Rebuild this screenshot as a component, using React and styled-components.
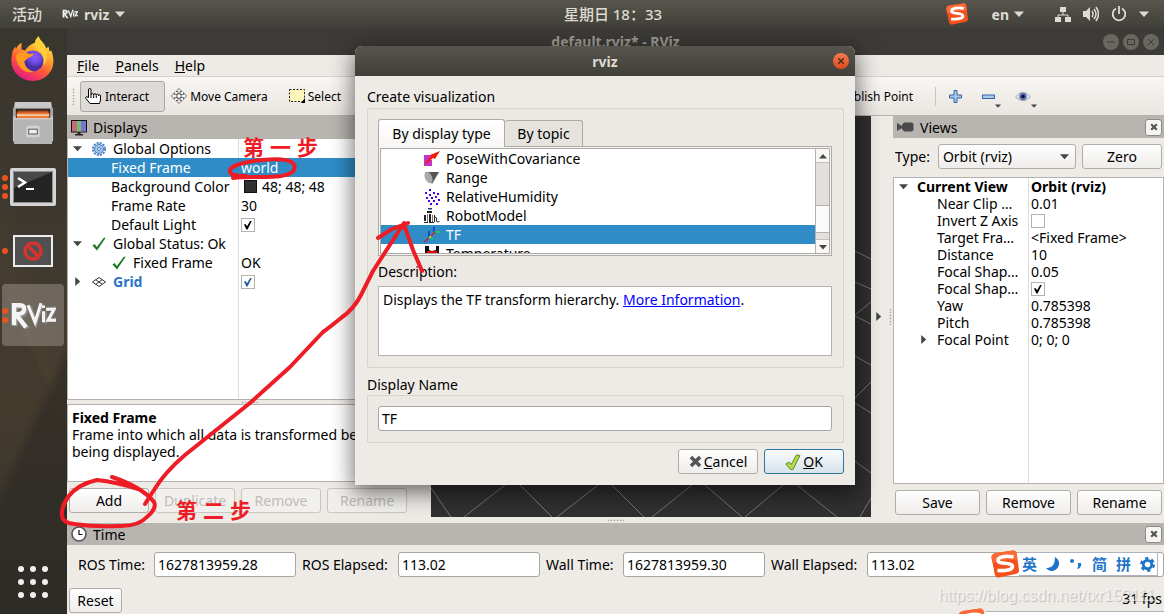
import React from 'react';
import styled, { createGlobalStyle } from 'styled-components';

const GlobalStyle = createGlobalStyle`
  * { box-sizing: border-box; }

  body {
    margin: 0;
    background: #eeebe7;
    color: #000;
    font-family: "Noto Sans", "Noto Sans CJK SC", sans-serif;
    font-size: 14px;
    line-height: 19px;
  }

  button, input, select {
    font: inherit;
    color: inherit;
    margin: 0;
  }

  svg {
    display: block;
    flex: none;
  }
`;

/* ---------- icons ---------- */

const Caret = ({ dir = 'down', color = '#454545', size = 9 }) => (
  <svg width={size} height={size} viewBox="0 0 10 10">
    <path
      fill={color}
      d={dir === 'down' ? 'M0 2.500h10L5 8z' : dir === 'up' ? 'M0 8h10L5 2.500z' : 'M2.500 0v10L8 5z'}
    />
  </svg>
);

const SogouIcon = ({ size = 22 }) => (
  <svg width={size} height={size} viewBox="0 0 28 28">
    <path d="M5 3L22 .5q3-.3 3.600 2.500L28 20q.3 3-2.500 3.800L8 27.500q-3.500.5-4.200-3L.5 7.500Q.2 4 5 3z" fill="#f4511e" />
    <path d="M5 3L22 .5q3-.3 3.600 2.500L26.500 10Q14 8 1.500 13L.5 7.500Q.2 4 5 3z" fill="#fb6a35" />
    <path d="M22.500 7C15 5.500 7 6.500 7 10.500c0 4 14.500 1.500 14.500 6 0 3.500-7 4.500-15 4" fill="none" stroke="#fff" strokeWidth="3.600" />
  </svg>
);

const FirefoxIcon = () => (
  <svg width="46" height="48" viewBox="0 0 48 48">
    <defs>
      <linearGradient id="fox" x1="0.8" y1="0" x2="0.3" y2="1">
        <stop offset="0" stopColor="#fff44f" />
        <stop offset="0.35" stopColor="#ffb02e" />
        <stop offset="0.65" stopColor="#ff5a36" />
        <stop offset="1" stopColor="#e31587" />
      </linearGradient>
      <radialGradient id="globe" cx="0.6" cy="0.3">
        <stop offset="0" stopColor="#9059ff" />
        <stop offset="0.6" stopColor="#6b4be0" />
        <stop offset="1" stopColor="#4a2da8" />
      </radialGradient>
    </defs>
    <path fill="url(#fox)" d="M30 0c1 5 6 7 8 13l2-2c1 2 1 4 1 5l2-1c4 9 3 20-4 26-7 7-19 8-28 2C3 38 0 29 2 20c0-4 2-7 4-9v3c1-3 3-5 6-7v7l4 1c2-4 7-7 10-8 0-3 2-5 4-7z" />
    <circle cx="24" cy="26" r="11" fill="url(#globe)" />
    <path fill="#ff9a1f" d="M6 20c5-4 9-3 12-2 2 1 5 1 7 0-1 3-3 4-6 5-2 1-2 3-4 3 0 5 4 10 10 11-8 3-18-3-19-17z" />
    <path fill="#ffcf3a" d="M26 7c-1 4 3 7 7 11 3 4 3 9 1 13 5-4 6-11 3-17-2-6-6-8-7-13-2 2-3 4-4 6z" />
  </svg>
);

const FilesIcon = () => (
  <svg width="42" height="44" viewBox="0 0 44 46">
    <path d="M3 1h38l2 14v27H1V15z" fill="#c9c9c9" />
    <path d="M1 7h42v9H1z" fill="#a8a8a8" />
    <path d="M4 8h36v11H4z" fill="#35261d" />
    <path d="M6 10h32v3H6z" fill="#a94a21" />
    <path d="M5 12h34v6H5z" fill="#f07b35" />
    <path d="M5 14h34v1.500H5z" fill="#f5e8d8" />
    <path d="M2 18h40v27H2z" fill="#b5b5b5" />
    <path d="M2 18h40v1H2z" fill="#ddd" />
    <rect x="15" y="26" width="14" height="12" rx="2" fill="#d2d2d2" />
    <rect x="17.500" y="29.500" width="9" height="5" fill="#eee" stroke="#555" />
  </svg>
);

const TerminalIcon = () => (
  <svg width="46" height="38" viewBox="0 0 46 38">
    <rect width="46" height="38" rx="2" fill="#d4d4d4" />
    <rect x="3" y="3" width="40" height="32" fill="#8d8d8d" />
    <rect x="4" y="4" width="38" height="30" fill="#242424" />
    <path d="M4 4h38L4 20z" fill="#484848" />
    <path d="M8 10l7 4.500L8 19" fill="none" stroke="#fff" strokeWidth="2.500" />
    <path d="M16 21h8" stroke="#fff" strokeWidth="2" />
  </svg>
);

const BlockedIcon = () => (
  <svg width="40" height="32" viewBox="0 0 40 32">
    <rect width="40" height="32" fill="#ececec" />
    <rect x="2" y="2" width="36" height="28" fill="#505050" />
    <circle cx="20" cy="16" r="8" fill="none" stroke="#d5332f" strokeWidth="3.500" />
    <path d="M14.500 10.500l11 11" stroke="#d5332f" strokeWidth="3.500" />
  </svg>
);

const RvizMark = ({ width = 46 }) => (
  <svg width={width} height={width * 0.62} viewBox="0 0 46 28">
    <g fill="none" stroke="#8a8a8a" strokeWidth="3.500">
      <path d="M6 25V6h6q5 0 4 5-1 4-8 4l10 12M20 5l6 17 6-19M35 10v12M37 8l8-1-6 12 8-1" />
    </g>
    <g fill="none" stroke="#f4f4f4">
      <path d="M4 24V4h6q5 0 4 5-1 4-8 4l10 13" strokeWidth="4.500" />
      <path d="M18 4l7 17 6-19M33.500 10v11M36 8h8l-6 11h8" strokeWidth="3" />
      <path d="M32 5.500h3" strokeWidth="2.500" />
    </g>
  </svg>
);

const AppsIcon = () => (
  <svg width="32" height="32" viewBox="0 0 32 32" fill="#f2f1ee">
    {[3, 16, 29].map((y) => [3, 15, 27].map((x) => <circle key={`${x}-${y}`} cx={x + 1} cy={y} r="3" />))}
  </svg>
);

const NetworkIcon = () => (
  <svg width="16" height="16" viewBox="0 0 16 16" fill="#dfdbd2">
    <path d="M5 1h6v5H5zM0 11h6v5H0zM10 11h6v5h-6z" />
    <path d="M8 6v3M3 12V9h10v3" fill="none" stroke="#dfdbd2" />
  </svg>
);

const SoundIcon = () => (
  <svg width="16" height="16" viewBox="0 0 16 16" fill="none" stroke="#dfdbd2" strokeWidth="1.500">
    <path d="M0 5h3l4-4v14l-4-4H0z" fill="#dfdbd2" stroke="none" />
    <path d="M9 5q2 3 0 6M11 3q4 5 0 10M13 1q5 7 0 14" />
  </svg>
);

const PowerIcon = () => (
  <svg width="16" height="16" viewBox="0 0 16 16" fill="none" stroke="#dfdbd2" strokeWidth="1.800">
    <path d="M5 2.500a6.300 6.300 0 1 0 6 0M8 0v8" />
  </svg>
);

const HandIcon = () => (
  <svg width="16" height="16" viewBox="0 0 16 16">
    <path d="M3.500 9.500V2q0-1.500 1.300-1.500T6 2v5q0-1.500 1.300-1.500T8.700 7q0-1.200 1.300-1.200T11.300 7.200q0-1 1.200-1T13.700 7.700q0-.9.900-.9t.9 1.200V12l-1 3.500H5l-4-5q-.8-1.500.5-1.800z" fill="#fff" stroke="#000" />
    <path d="M6 7v3M8.700 7v3M11.300 7.500V10" stroke="#000" />
  </svg>
);

const MoveIcon = () => (
  <svg width="16" height="16" viewBox="0 0 16 16" fill="#f5f5f5" stroke="#555" strokeWidth="0.800">
    <path d="M8 .5l3 3H9v3h3.500v-2l3 3.500-3 3.500v-2H9v3h2l-3 3-3-3h2v-3H3.500v2L.5 8l3-3.500v2H7v-3H5z" />
    <circle cx="8" cy="8" r="2.500" fill="none" />
  </svg>
);

const SelectIcon = () => (
  <svg width="16" height="14" viewBox="0 0 16 14">
    <rect x="0.500" y="0.500" width="15" height="12" fill="#fff6b8" stroke="#222" strokeDasharray="2 1.500" />
    <path d="M16 9v5h-4z" />
  </svg>
);

const PlusIcon = () => (
  <svg width="13" height="13" viewBox="0 0 13 13">
    <path d="M5 .5h3V5h4.500v3H8v4.500H5V8H.5V5H5z" fill="#a9c8ea" stroke="#3465a4" />
  </svg>
);

const MinusIcon = () => (
  <svg width="13" height="13" viewBox="0 0 13 13">
    <rect x="0.500" y="5" width="12" height="3.500" fill="#a9c8ea" stroke="#3465a4" />
  </svg>
);

const EyeIcon = () => (
  <svg width="16" height="13" viewBox="0 0 16 13">
    <path d="M.5 7Q8-2.500 15.500 7 8 14.500.5 7z" fill="#e8e8e8" stroke="#aaa" />
    <circle cx="8" cy="6.500" r="3.800" fill="#5a6fc0" />
    <circle cx="8" cy="6.500" r="1.800" fill="#0b0b2a" />
  </svg>
);

const MonitorIcon = () => (
  <svg width="16" height="16" viewBox="0 0 16 16">
    <rect x="0.500" y="0.500" width="15" height="11.500" fill="#c86b78" stroke="#111" />
    <path d="M6 1h4v10.500H6z" fill="#6cc078" />
    <path d="M10 1h5v10.500h-5z" fill="#7a74cf" />
    <path d="M6.500 12h3v2h2.500v1.500H4V14h2.500z" fill="#222" />
  </svg>
);

const GearIcon = () => (
  <svg width="14" height="14" viewBox="0 0 14 14" fill="none" stroke="#4a7fc4">
    <circle cx="7" cy="7" r="6" strokeWidth="2" strokeDasharray="2 1.140" />
    <circle cx="7" cy="7" r="4.500" fill="#a4c4ec" />
    <circle cx="7" cy="7" r="1.500" fill="#fff" />
  </svg>
);

const CheckIcon = () => (
  <svg width="14" height="14" viewBox="0 0 14 14">
    <path d="M.5 8.500L2.500 7l2.300 3L12 .5l1.500.5L5 13.500z" fill="#1b7a22" />
  </svg>
);

const GridIcon = () => (
  <svg width="14" height="10" viewBox="0 0 14 10" fill="none" stroke="#333">
    <path d="M7 .5L13.500 5 7 9.500.5 5zM3.700 2.700l6.600 4.600M10.300 2.700L3.700 7.300" />
  </svg>
);

const CameraIcon = () => (
  <svg width="17" height="10" viewBox="0 0 17 10" fill="#4a4a4a">
    <path d="M0 1l5 3V3l2-2.500h8L16.500 2v6L15 9.500H7L5 7V6L0 9z" />
  </svg>
);

const ClockIcon = () => (
  <svg width="16" height="16" viewBox="0 0 16 16" fill="none">
    <circle cx="8" cy="8" r="7" fill="#fff" stroke="#555" strokeWidth="1.600" />
    <path d="M8 4v4.500h3.500" stroke="#111" strokeWidth="1.200" />
  </svg>
);

const CrossIcon = ({ size = 8, color = '#555' }) => (
  <svg width={size} height={size} viewBox="0 0 8 8">
    <path d="M1.200 1.200l5.600 5.600M6.800 1.200L1.200 6.800" stroke={color} strokeWidth="2.200" />
  </svg>
);

const OkIcon = () => (
  <svg width="16" height="16" viewBox="0 0 16 16">
    <path d="M.8 10l3-2 2.400 2.500L11.500.8l3.500.7L8 15.500H5.500z" fill="#b5d94c" stroke="#5b8f22" />
  </svg>
);

const PoseIcon = () => (
  <svg width="16" height="16" viewBox="0 0 16 16">
    <path d="M0 4h7v5h1v6H0z" fill="#c234c8" />
    <path d="M16 0l-5 8-2-1-7 6-1-1 6-7-1-1z" fill="#f21c0d" />
  </svg>
);

const RangeIcon = () => (
  <svg width="16" height="14" viewBox="0 0 16 14">
    <path d="M1 1h14L8 13z" fill="#555" />
    <ellipse cx="4.500" cy="6.500" rx="3.500" ry="6" fill="#aaa" transform="rotate(-25 4.500 6.500)" />
  </svg>
);

const HumidityIcon = () => (
  <svg width="16" height="16" viewBox="0 0 16 16" fill="#4a00f0">
    <path d="M5 0h2v2H5zM1 3h2v2H1zM9 3h2v2H9zM13 4h2v2h-2zM5 5h2v2H5zM11 7h2v2h-2zM2 8h2v2H2zM7 8h2v2H7zM14 10h2v2h-2zM4 11h2v2H4zM9 11h2v2H9zM6 14h2v2H6zM12 14h2v2h-2z" />
  </svg>
);

const RobotIcon = () => (
  <svg width="16" height="16" viewBox="0 0 16 16">
    <path d="M4 0h4v1.500H4z" fill="#223a7a" />
    <path d="M3 3h5v2H3zM0 7h2v6H0zM5 6h2v9H5zM10 7h1v7h-1z" fill="#222" />
    <path d="M3 6h1v8H3zM8 7h1v7H8z" fill="#777" />
    <path d="M0 14.500h4M6 14.500h4M11 9q2 0 1.500 3t3 1.500" fill="none" stroke="#222" />
  </svg>
);

const TfIcon = () => (
  <svg width="16" height="16" viewBox="0 0 16 16" fill="none" strokeWidth="1.500">
    <path d="M5 4v7M10 0v5" stroke="#1d2fd0" />
    <path d="M5 10l4 2M10 5h6" stroke="#17d83a" />
    <path d="M0 15l5-4M7 9l4-4" stroke="#c22" />
    <path d="M5 11l2-2" stroke="#dcd23c" />
  </svg>
);

const TemperatureIcon = () => (
  <svg width="16" height="16" viewBox="0 0 16 16">
    <path d="M1 0h14v16H1z" fill="#111" />
    <path d="M3 5h10v10H3z" fill="#e00" />
    <path d="M5 0h7v4l-4 1-3-1z" fill="#fff" />
    <path d="M6 8h4v2H6z" fill="#fff" />
  </svg>
);

/* ---------- desktop ---------- */

const Desktop = styled.div`
  position: relative;
  min-height: 100vh;
  display: flex;
  flex-direction: column;
  overflow: hidden;
`;

const TopBar = styled.header`
  height: 28px;
  display: grid;
  grid-template-columns: 62px 1fr auto 1fr;
  align-items: center;
  background: linear-gradient(#57554c, #403f39);
  color: #dfdbd2;
  font-weight: 700;
`;

const TopButton = styled.button`
  display: flex;
  align-items: center;
  gap: 6px;
  padding: 0;
  border: 0;
  background: none;
  font-weight: 700;
`;

const Activities = styled(TopButton)`
  padding-left: 12px;
  font-size: 15px;
  font-weight: 500;
`;

const Clock = styled.span`
  font-size: 15px;
  font-weight: 500;
`;

const Tray = styled.div`
  display: flex;
  justify-content: flex-end;
  align-items: center;
  gap: 12px;
  padding-right: 15px;
`;

const TrayGroup = styled.div`
  display: flex;
  align-items: center;
  gap: 5px;
  margin: 0 19px 0 12px;
`;

const Body = styled.div`
  flex: 1;
  display: flex;
`;

const Dock = styled.nav`
  flex: none;
  width: 67px;
  display: flex;
  flex-direction: column;
  align-items: flex-start;
  gap: 2px;
  padding: 0 2px 1px;
  background:
    linear-gradient(115deg, transparent 62%, rgba(42, 40, 36, 0.6) 66%),
    linear-gradient(65deg, transparent 45%, rgba(95, 80, 55, 0.2) 46%, transparent 60%),
    linear-gradient(#39362f, #40392e 45%, #443b2d 65%, #34322d);
`;

const DockItem = styled.button`
  width: 62px;
  height: 62px;
  display: grid;
  grid-template-columns: 6px 1fr;
  align-items: center;
  justify-items: center;
  padding: 0 6px 0 0;
  border: 0;
  border-radius: 4px;
  background: ${({ $active }) => ($active ? 'rgba(190, 184, 175, 0.36)' : 'none')};

  &:last-child { margin-top: auto; }
`;

const Dots = styled.span`
  display: flex;
  flex-direction: column;
  gap: 3px;

  i {
    width: 6px;
    height: 6px;
    border-radius: 50%;
    background: #e95420;
  }
`;

/* ---------- main window ---------- */

const Window = styled.main`
  flex: 1;
  min-width: 0;
  display: flex;
  flex-direction: column;
`;

const TitleBar = styled.div`
  height: 27px;
  display: grid;
  grid-template-columns: 1fr auto 1fr;
  align-items: center;
  padding: 0 5px;
  background: #3c3b37;
  color: #a09d95;
  font-weight: 700;

  span { grid-column: 2; }
`;

const WindowButtons = styled.div`
  display: flex;
  justify-content: flex-end;
  gap: 4px;
`;

const RoundButton = styled.button`
  width: 16px;
  height: 16px;
  display: grid;
  place-items: center;
  padding: 0;
  border: 0;
  border-radius: 50%;
  background: ${({ $close }) => ($close ? 'linear-gradient(#f47a52, #df4a1b)' : '#686760')};
  color: #3c3b37;
`;

const MenuBar = styled.div`
  height: 22px;
  display: flex;
  align-items: center;
  gap: 16px;
  padding: 0 10px;
  border-bottom: 1px solid #d5d1cc;

  button {
    padding: 0;
    border: 0;
    background: none;
  }
`;

const ToolBar = styled.div`
  height: 39px;
  display: flex;
  align-items: center;
  padding: 0 116px 0 5px;
  background: linear-gradient(#f8f6f3, #eae6e1);
  border-bottom: 1px solid #b5b1ac;
  font-size: 12px;
`;

const Handle = styled.span`
  width: ${({ $vertical }) => ($vertical ? '3px' : '17px')};
  height: ${({ $vertical }) => ($vertical ? '17px' : '3px')};
  background: radial-gradient(#aaa6a0 40%, transparent 50%) 0 0 / 3px 3px;
`;

const Tool = styled.button`
  height: 31px;
  display: flex;
  align-items: center;
  gap: ${({ $pressed }) => ($pressed ? '4px' : '3px')};
  margin-left: ${({ $pressed }) => ($pressed ? '5px' : '0')};
  padding: 0 ${({ $pressed }) => ($pressed ? '15px' : '14px')} 0 ${({ $pressed }) => ($pressed ? '4px' : '5px')};
  border: 1px solid ${({ $pressed }) => ($pressed ? '#aaa6a1' : 'transparent')};
  border-radius: 3px;
  background: ${({ $pressed }) => ($pressed ? '#dedad7' : 'none')};
`;

const ToolsEnd = styled.div`
  display: flex;
  align-items: center;
  margin-left: auto;
`;

const ToolSeparator = styled.span`
  width: 1px;
  height: 19px;
  margin: 0 13px 0 7px;
  background: #c9c5c0;
`;

const IconTool = styled.button`
  width: 33px;
  height: 26px;
  display: flex;
  align-items: center;
  padding: 0;
  border: 0;
  background: none;

  svg + svg { align-self: flex-end; }
`;

const Workspace = styled.div`
  flex: 1;
  display: flex;
`;

const Panel = styled.section`
  flex: none;
  width: ${({ $width }) => $width}px;
  display: flex;
  flex-direction: column;
`;

const PanelHeader = styled.h2`
  height: ${({ $tall }) => ($tall ? '23px' : '22px')};
  display: flex;
  align-items: center;
  gap: 6px;
  margin: 0;
  padding: 0 2px 0 4px;
  background: #b8b4b0;
  font-size: 14px;
  font-weight: 400;

  button { margin-left: auto; }
`;

const CloseButton = styled.button`
  width: 17px;
  height: 17px;
  display: grid;
  place-items: center;
  padding: 0;
  border: 1px solid #8f8b86;
  border-radius: 3px;
  background: #f6f5f3;
`;

const Tree = styled.div`
  flex: 1;
  border: 1px solid #b5b1ac;
  border-width: ${({ $framed }) => ($framed ? '1px' : '0 0 1px 1px')};
  background: linear-gradient(#dcdcdc, #dcdcdc) ${({ $split }) => $split}px 0 / 1px 100% no-repeat #fff;
`;

const TreeRow = styled.div`
  height: ${({ $height }) => $height}px;
  display: grid;
  grid-template-columns: ${({ $split }) => $split}px 1fr;
  align-items: center;
  line-height: ${({ $height }) => $height}px;
  background: ${({ $selected }) => ($selected ? '#308cc6' : 'none')};
  color: ${({ $selected }) => ($selected ? '#fff' : '#000')};
  font-weight: ${({ $bold }) => ($bold ? 700 : 400)};
`;

const TreeName = styled.span`
  display: flex;
  align-items: center;
  padding-left: ${({ $indent }) => $indent}px;
  min-width: 0;
  color: ${({ $link }) => ($link ? '#2a76c6' : 'inherit')};
  font-weight: ${({ $link }) => ($link ? 700 : 'inherit')};
  white-space: nowrap;
`;

const TreeSlot = styled.span`
  flex: none;
  width: ${({ $width }) => $width}px;
`;

const TreeValue = styled.span`
  display: flex;
  align-items: center;
  gap: 5px;
  padding-left: 3px;
`;

const Swatch = styled.span`
  width: 13px;
  height: 13px;
  margin-left: 3px;
  border: 1px solid #111;
  background: #303030;
`;

const CheckBox = styled.input`
  appearance: none;
  width: 14px;
  height: 14px;
  border: 1px solid #b5b1ac;
  background: #fff;
  color: ${({ $blue }) => ($blue ? '#1d5fa0' : '#000')};

  &:checked::before {
    content: "";
    display: block;
    width: 8px;
    height: 9px;
    margin: 2px 0 0 2px;
    background: currentColor;
    clip-path: polygon(0 45%, 20% 40%, 38% 65%, 80% 0, 100% 0, 45% 100%, 30% 100%);
  }
`;

const Splitter = styled.div`
  height: ${({ $height }) => $height}px;
  display: flex;
  align-items: center;
  justify-content: center;
`;

const SideSplitter = styled.div`
  flex: none;
  width: 22px;
  display: flex;
  align-items: center;
  justify-content: space-between;
  padding: 0 1px 0 3px;
`;

const HelpText = styled.div`
  height: 78px;
  padding: 4px;
  overflow: hidden;
  border: 1px solid #b5b1ac;
  background: #fff;
  line-height: 17px;
  white-space: nowrap;
`;

const ButtonRow = styled.div`
  display: flex;
  gap: 6px;
  padding: ${({ $pad }) => $pad};
`;

const Button = styled.button`
  height: 25px;
  min-width: ${({ $width }) => $width || 80}px;
  display: flex;
  align-items: center;
  justify-content: center;
  gap: 2px;
  padding: 0 6px;
  border: 1px solid ${({ $primary }) => ($primary ? '#30739c' : '#b0aca8')};
  border-radius: 3px;
  background: ${({ $primary }) => ($primary ? 'linear-gradient(#fbfcfd, #d7e2ea)' : 'linear-gradient(#fefefe, #efedeb)')};

  &:disabled {
    color: #bebbb7;
    border-color: #c9c5c1;
    background: #f2f0ed;
  }
`;

const Scene = styled.div`
  flex: 1;
  min-width: 0;
  background: #303030;

  svg {
    width: 100%;
    height: 401px;
  }
`;

const TypeRow = styled.div`
  display: flex;
  align-items: center;
  gap: 6px;
  padding: 6px 2px 8px;

  label { margin-right: 2px; }
`;

const SelectBox = styled.span`
  flex: 1;
  display: grid;
  align-items: center;

  select, svg { grid-area: 1 / 1; }
  svg { justify-self: end; margin-right: 7px; pointer-events: none; }
`;

const Select = styled.select`
  appearance: none;
  width: 100%;
  height: 25px;
  padding: 0 4px;
  border: 1px solid #b0aca8;
  border-radius: 3px;
  background: linear-gradient(#fefefe, #efedeb);
`;

const TimeRow = styled.div`
  display: flex;
  align-items: center;
  gap: 6px;
  padding: 7px 0 11px 11px;
`;

const Field = styled.label`
  display: flex;
  align-items: center;
  justify-content: space-between;
  gap: 6px;
  flex: ${({ $grow }) => ($grow ? '1' : 'none')};
  width: ${({ $width }) => ($width ? `${$width}px` : 'auto')};
  white-space: nowrap;
`;

const FieldName = styled.span`
  min-width: ${({ $grow }) => ($grow ? '90px' : '0')};
`;

const TextInput = styled.input`
  height: 25px;
  width: 142px;
  min-width: 0;
  flex: ${({ $grow }) => ($grow ? '1' : 'none')};
  padding: 0 3px;
  border: 1px solid #a9a5a0;
  border-radius: 3px;
  background: #fff;
`;

const StatusRow = styled.div`
  display: flex;
  align-items: center;
  justify-content: space-between;
  padding: 0 2px 1px;
`;

const Fps = styled.span`
  margin-bottom: 5px;
`;

/* ---------- dialog ---------- */

const Dialog = styled.section`
  position: absolute;
  left: 355px;
  top: 46px;
  width: 500px;
  border-radius: 7px 7px 0 0;
  background: #eeebe7;
  box-shadow: 0 6px 22px 2px rgba(0, 0, 0, 0.55);
`;

const DialogTitle = styled(TitleBar)`
  height: 30px;
  padding: 0 6px;
  border-radius: 7px 7px 0 0;
  background: linear-gradient(#57554c, #403f39);
  color: #dfdbd2;
`;

const DialogBody = styled.div`
  display: flex;
  flex-direction: column;
  padding: 11px 11px 11px 12px;
`;

const GroupLabel = styled.h3`
  margin: 0 0 2px;
  font-size: 14px;
  font-weight: 400;
`;

const NameLabel = styled.label`
  padding: 7px 0 1px;
`;

const Group = styled.div`
  padding: 10px 11px 11px 10px;
  border: 1px solid #d6d2cd;
  border-radius: 2px;
  background: #ece9e5;
`;

const Tabs = styled.div`
  display: flex;
  align-items: flex-end;
  height: 27px;
`;

const Tab = styled.button`
  height: ${({ $active }) => ($active ? '28px' : '26px')};
  width: ${({ $active }) => ($active ? '127px' : '78px')};
  margin-bottom: ${({ $active }) => ($active ? '-1px' : '0')};
  padding: 0;
  border: 1px solid #aeaaa5;
  border-left-width: ${({ $active }) => ($active ? '1px' : '0')};
  border-bottom: 0;
  border-radius: 3px 3px 0 0;
  background: ${({ $active }) => ($active ? 'linear-gradient(#fff, #f8f7f6)' : '#e6e3df')};
  z-index: 1;
`;

const ListFrame = styled.div`
  height: 110px;
  padding: 1px;
  border: 1px solid #aeaaa5;
  background: #f6f5f3;
`;

const ListInner = styled.div`
  height: 106px;
  display: flex;
  border: 1px solid #aeaaa5;
  background: #fff;
`;

const List = styled.ul`
  flex: 1;
  margin: 0;
  padding: 0;
  overflow: hidden;
  list-style: none;
`;

const ListItem = styled.li`
  height: 19px;
  display: flex;
  align-items: center;
  gap: 6px;
  padding-left: 43px;
  background: ${({ $selected }) => ($selected ? '#308cc6' : 'none')};
  color: ${({ $selected }) => ($selected ? '#fff' : '#000')};
`;

const ScrollBar = styled.div`
  width: 14px;
  display: flex;
  flex-direction: column;
  align-items: center;
  border-left: 1px solid #b5b1ac;
  background: #e2e0dd;
`;

const ScrollButton = styled.button`
  width: 13px;
  height: 14px;
  display: grid;
  place-items: center;
  padding: 0;
  border: solid #c5c1bc;
  border-width: ${({ $end }) => ($end ? '1px 0 0' : '0 0 1px')};
  background: #f8f7f6;
`;

const ScrollThumb = styled.div`
  width: 13px;
  height: 28px;
  margin: auto 0 6px;
  border: 1px solid #b5b1ac;
  border-width: 1px 0;
  background: #fbfafa;
`;

const DescriptionLabel = styled.div`
  padding: 6px 0 5px;
`;

const Description = styled.div`
  height: 70px;
  padding: 3px 4px;
  border: 1px solid #b5b1ac;
  background: #fff;

  a { color: #00f; }
`;

const NameInput = styled(TextInput)`
  display: block;
  width: 100%;
`;

const DialogButtons = styled.div`
  display: flex;
  justify-content: flex-end;
  gap: 6px;
  padding-top: 6px;
`;

/* ---------- floating things ---------- */

const Ime = styled.div`
  position: absolute;
  right: 6px;
  top: 550px;
  display: flex;
  align-items: center;
  color: #1e74c8;
  font-weight: 700;
  font-size: 15px;
`;

const ImeBar = styled.div`
  height: 24px;
  display: flex;
  align-items: center;
  gap: 9px;
  padding: 0 2px 0 3px;
  border: 1px solid #b0b4bc;
  border-left: 0;
  background: #fff;
`;

const ImeGhost = styled(Ime)`
  right: 0;
  top: 608px;
  width: 206px;
  align-items: flex-start;

  div {
    flex: 1;
    margin-top: 3px;
    height: 24px;
    padding: 0;
    border-right: 0;
  }
`;

const Watermark = styled.span`
  position: absolute;
  right: 9px;
  top: 586px;
  color: rgba(255, 255, 255, 0.6);
  text-shadow: 1px 1px 1px rgba(0, 0, 0, 0.2);
  font-family: "Liberation Sans", sans-serif;
  font-size: 16px;
`;

const Marks = styled.svg`
  position: absolute;
  inset: 0;
  pointer-events: none;
`;

const Step = styled.div`
  position: absolute;
  left: ${({ $x }) => $x}px;
  top: ${({ $y }) => $y}px;
  display: flex;
  gap: 6px;
  color: #ee1c25;
  font-family: "Noto Sans CJK SC", sans-serif;
  font-size: 21px;
  font-weight: 700;
  line-height: 24px;
`;

/* ---------- data ---------- */

const displays = [
  { name: 'Global Options', indent: 5, open: true, icon: <GearIcon /> },
  { name: 'Fixed Frame', indent: 43, value: 'world', selected: true },
  { name: 'Background Color', indent: 43, value: '48; 48; 48', swatch: true },
  { name: 'Frame Rate', indent: 43, value: '30' },
  { name: 'Default Light', indent: 43, check: true },
  { name: 'Global Status: Ok', indent: 5, open: true, icon: <CheckIcon /> },
  { name: 'Fixed Frame', indent: 44, icon: <CheckIcon />, value: 'OK' },
  { name: 'Grid', indent: 5, open: false, icon: <GridIcon />, link: true, check: true },
];

const view = [
  { name: 'Current View', value: 'Orbit (rviz)', indent: 5, open: true, bold: true },
  { name: 'Near Clip …', value: '0.01', indent: 43 },
  { name: 'Invert Z Axis', check: false, indent: 43 },
  { name: 'Target Fra…', value: '<Fixed Frame>', indent: 43 },
  { name: 'Distance', value: '10', indent: 43 },
  { name: 'Focal Shap…', value: '0.05', indent: 43 },
  { name: 'Focal Shap…', check: true, indent: 43 },
  { name: 'Yaw', value: '0.785398', indent: 43 },
  { name: 'Pitch', value: '0.785398', indent: 43 },
  { name: 'Focal Point', value: '0; 0; 0', indent: 25, open: false },
];

const types = [
  { name: 'PoseWithCovariance', icon: <PoseIcon /> },
  { name: 'Range', icon: <RangeIcon /> },
  { name: 'RelativeHumidity', icon: <HumidityIcon /> },
  { name: 'RobotModel', icon: <RobotIcon /> },
  { name: 'TF', icon: <TfIcon />, selected: true },
  { name: 'Temperature', icon: <TemperatureIcon /> },
];

const dock = [
  { name: 'Firefox', icon: <FirefoxIcon />, dots: 0 },
  { name: 'Files', icon: <FilesIcon />, dots: 0 },
  { name: 'Terminal', icon: <TerminalIcon />, dots: 3 },
  { name: 'Blocked', icon: <BlockedIcon />, dots: 1 },
  { name: 'RViz', icon: <RvizMark />, dots: 2, active: true },
  { name: 'Applications', icon: <AppsIcon />, dots: 0 },
];

const times = [
  { label: 'ROS Time:', value: '1627813959.28', width: 218 },
  { label: 'ROS Elapsed:', value: '113.02', width: 238 },
  { label: 'Wall Time:', value: '1627813959.30', width: 219 },
  { label: 'Wall Elapsed:', value: '113.02', grow: true },
];

const PropertyTree = ({ rows, split, height, framed }) => (
  <Tree $split={split} $framed={framed} role="tree">
    {rows.map((row, i) => (
      <TreeRow key={i} $split={split} $height={height} $selected={row.selected} $bold={row.bold} role="treeitem">
        <TreeName $indent={row.indent} $link={row.link}>
          {row.open !== undefined && (
            <>
              <Caret dir={row.open ? 'down' : 'right'} />
              <TreeSlot $width={row.icon ? 10 : 9} />
            </>
          )}
          {row.icon}
          {row.icon && <TreeSlot $width={7} />}
          {row.name}
        </TreeName>
        <TreeValue>
          {row.swatch && <Swatch />}
          {row.check !== undefined && (
            <CheckBox type="checkbox" defaultChecked={row.check} $blue={row.link} aria-label={row.name} />
          )}
          {row.value}
        </TreeValue>
      </TreeRow>
    ))}
  </Tree>
);

const AddDisplayDialog = () => (
  <Dialog role="dialog" aria-label="rviz">
    <DialogTitle>
      <span>rviz</span>
      <WindowButtons>
        <RoundButton $close aria-label="Close dialog">
          <svg width="6" height="6" viewBox="0 0 6 6"><path d="M0 0l6 6M6 0L0 6" stroke="#3c2a20" strokeWidth="1.300" /></svg>
        </RoundButton>
      </WindowButtons>
    </DialogTitle>
    <DialogBody>
      <GroupLabel>Create visualization</GroupLabel>
      <Group>
        <Tabs role="tablist">
          <Tab $active role="tab">By display type</Tab>
          <Tab role="tab">By topic</Tab>
        </Tabs>
        <ListFrame>
          <ListInner>
            <List>
              {types.map((type) => (
                <ListItem key={type.name} $selected={type.selected}>{type.icon}{type.name}</ListItem>
              ))}
            </List>
            <ScrollBar>
              <ScrollButton aria-label="Scroll up"><Caret dir="up" size={8} /></ScrollButton>
              <ScrollThumb />
              <ScrollButton $end aria-label="Scroll down"><Caret size={8} /></ScrollButton>
            </ScrollBar>
          </ListInner>
        </ListFrame>
        <DescriptionLabel>Description:</DescriptionLabel>
        <Description>
          Displays the TF transform hierarchy. <a href="#tf">More Information</a>.
        </Description>
      </Group>
      <NameLabel htmlFor="display-name">Display Name</NameLabel>
      <Group>
        <NameInput id="display-name" defaultValue="TF" />
      </Group>
      <DialogButtons>
        <Button><CrossIcon size={13} /><span><u>C</u>ancel</span></Button>
        <Button $primary><OkIcon /><span><u>O</u>K</span></Button>
      </DialogButtons>
    </DialogBody>
  </Dialog>
);

const App = () => (
  <Desktop>
    <GlobalStyle />
    <TopBar>
      <Activities>活动</Activities>
      <TopButton>
        <RvizMark width={16} />
        rviz
        <Caret color="#dfdbd2" size={10} />
      </TopButton>
      <Clock>星期日 18：33</Clock>
      <Tray>
        <SogouIcon />
        <TrayGroup>en <Caret color="#dfdbd2" size={10} /></TrayGroup>
        <NetworkIcon />
        <SoundIcon />
        <PowerIcon />
        <Caret color="#dfdbd2" size={10} />
      </Tray>
    </TopBar>

    <Body>
      <Dock>
        {dock.map((item) => (
          <DockItem key={item.name} $active={item.active} aria-label={item.name}>
            <Dots>{Array.from({ length: item.dots }, (_, i) => <i key={i} />)}</Dots>
            {item.icon}
          </DockItem>
        ))}
      </Dock>

      <Window>
        <TitleBar>
          <span>default.rviz* - RViz</span>
          <WindowButtons>
            {['M4 8h8', 'M4.500 5.500h7v5h-7z', 'M5 5l6 6M11 5l-6 6'].map((d) => (
              <RoundButton key={d} aria-label="Window control">
                <svg width="16" height="16" viewBox="0 0 16 16" fill="none" stroke="#3c3b37"><path d={d} /></svg>
              </RoundButton>
            ))}
          </WindowButtons>
        </TitleBar>
        <MenuBar>
          <button><u>F</u>ile</button>
          <button><u>P</u>anels</button>
          <button><u>H</u>elp</button>
        </MenuBar>
        <ToolBar>
          <Handle $vertical />
          <Tool $pressed><HandIcon />Interact</Tool>
          <Tool><MoveIcon />Move Camera</Tool>
          <Tool><SelectIcon />Select</Tool>
          <ToolsEnd>
            <Tool>Publish Point</Tool>
            <ToolSeparator />
            <IconTool aria-label="Add tool"><PlusIcon /></IconTool>
            <IconTool aria-label="Remove tool"><MinusIcon /><Caret size={6} /></IconTool>
            <IconTool aria-label="Visibility"><EyeIcon /><Caret size={6} /></IconTool>
          </ToolsEnd>
        </ToolBar>

        <Workspace>
          <Panel $width={364}>
            <PanelHeader $tall><MonitorIcon />Displays</PanelHeader>
            <PropertyTree rows={displays} split={170} height={19} />
            <Splitter $height={4}><Handle /></Splitter>
            <HelpText>
              <b>Fixed Frame</b><br />
              Frame into which all data is transformed before<br />
              being displayed.
            </HelpText>
            <ButtonRow $pad="6px 2px 4px">
              <Button>Add</Button>
              <Button disabled>Duplicate</Button>
              <Button disabled>Remove</Button>
              <Button disabled>Rename</Button>
            </ButtonRow>
          </Panel>

          <Scene>
            <svg viewBox="0 0 440 401" preserveAspectRatio="xMaxYMax slice" stroke="#777" fill="none">
              <path d="M0 372l20 29M74 369l-41 32M89 369l32 32M167 369l-41 32M181 369l32 32M261 369l-40 32M274 369l37 32M352 369l-38 32M366 369l40 32M424 345l16 12M429 401l11-19" />
              <path d="M424 135l16 8M424 166l16 7M424 199l16-13M424 200l16 8M424 240l16 9M424 282l16-16M424 287l16 10" />
            </svg>
          </Scene>
          <SideSplitter><Caret dir="right" /><Handle $vertical /></SideSplitter>

          <Panel $width={271}>
            <PanelHeader><CameraIcon />Views<CloseButton aria-label="Close views"><CrossIcon /></CloseButton></PanelHeader>
            <TypeRow>
              <label htmlFor="view-type">Type:</label>
              <SelectBox>
                <Select id="view-type"><option>Orbit (rviz)</option></Select>
                <Caret />
              </SelectBox>
              <Button>Zero</Button>
            </TypeRow>
            <PropertyTree rows={view} split={134} height={17} framed />
            <ButtonRow $pad="6px 2px 2px">
              <Button $width={85}>Save</Button>
              <Button $width={85}>Remove</Button>
              <Button $width={85}>Rename</Button>
            </ButtonRow>
          </Panel>
        </Workspace>

        <Splitter $height={6}><Handle /></Splitter>
        <PanelHeader><ClockIcon />Time<CloseButton aria-label="Close time"><CrossIcon /></CloseButton></PanelHeader>
        <TimeRow>
          {times.map((time) => (
            <Field key={time.label} $width={time.width} $grow={time.grow}>
              <FieldName $grow={time.grow}>{time.label}</FieldName>
              <TextInput defaultValue={time.value} $grow={time.grow} />
            </Field>
          ))}
        </TimeRow>
        <StatusRow>
          <Button $width={53}>Reset</Button>
          <Fps>31 fps</Fps>
        </StatusRow>
      </Window>
    </Body>

    <AddDisplayDialog />

    <Ime>
      <SogouIcon size={28} />
      <ImeBar>
        <span>英</span>
        <svg width="14" height="14" viewBox="0 0 14 14" fill="#1e74c8"><path d="M9 0q5 3 4 8-2 6-8 6-3 0-5-3 9 1 9-11z" /></svg>
        <svg width="14" height="14" viewBox="0 0 14 14" fill="#1e74c8"><circle cx="3" cy="4" r="2" /><path d="M9 6h3q1 4-3 6l-1-1q2-1 1-2z" /></svg>
        <span>简</span>
        <span>拼</span>
        <svg width="15" height="15" viewBox="0 0 16 16" fill="none" stroke="#1e74c8">
          <circle cx="8" cy="8" r="4.500" strokeWidth="3" />
          <circle cx="8" cy="8" r="6.700" strokeWidth="2.500" strokeDasharray="3.500 3.516" />
        </svg>
      </ImeBar>
    </Ime>
    <ImeGhost><SogouIcon size={28} /><ImeBar /></ImeGhost>
    <Watermark>https://blog.csdn.net/txr152111</Watermark>

    <Marks width="1164" height="614" viewBox="0 0 1164 614" fill="none" stroke="#ee1c25" strokeWidth="4" strokeLinecap="round" strokeLinejoin="round">
      <path d="M233 178C252 175 287 181 294 170 298 159 280 158 262 160 244 162 228 166 230 172 231 176 240 176 246 176" />
      <path d="M138 489Q116 482 97 480 78 484 68 497 61 507 62 516 63 523 74 524 94 527 118 526 138 527 148 516 157 508 154 502 142 487 112 477" />
      <path d="M145 504Q150 496 154 490 165 472 185 455L210 435 250 403 290 367 323 332Q330 327 341 318 354 309 361 295L373 271 404 223M378 238L392 229 408 223M404 225L413 250 422 271" />
    </Marks>
    <Step $x={243} $y={134}><span>第</span><span>一</span><span>步</span></Step>
    <Step $x={176} $y={497}><span>第</span><span>二</span><span>步</span></Step>
  </Desktop>
);

export default App;
